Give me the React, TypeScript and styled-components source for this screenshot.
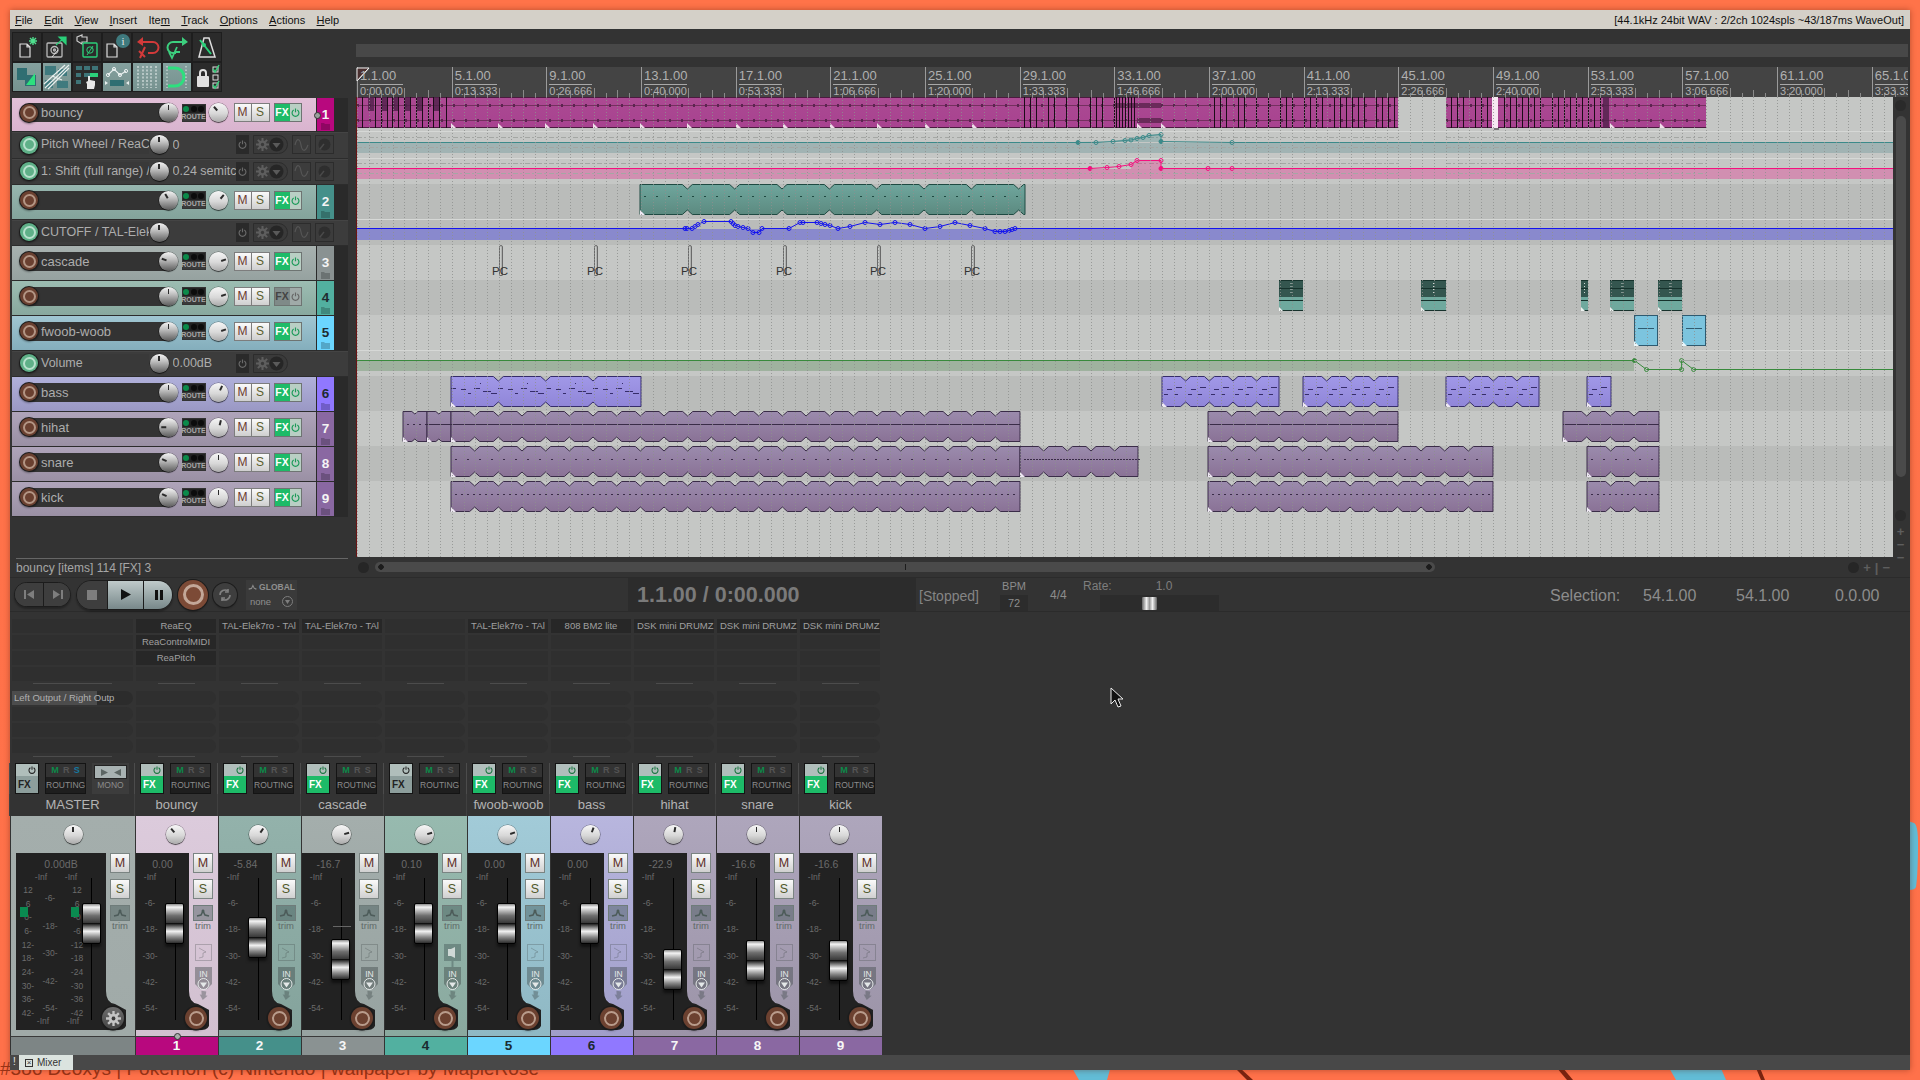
import React, { useId } from "react";
import styled, { createGlobalStyle } from "styled-components";

const Global = createGlobalStyle`
  html, body { margin: 0; padding: 0; background: #ff7248; }
  body { font-family: "Liberation Sans", Arial, sans-serif; overflow: hidden; }
  * { box-sizing: border-box; }
`;

/* ---------- data ---------- */
const ORIGIN = 357;
const BAR = 23.667;
type Tone = { row: [string, string]; num: string; dark?: boolean; strip: [string, string] };
const TONES: Record<string, Tone> = {
  bouncy: { row: ["#e2c0d8", "#d9b4cf"], num: "#b8087e", strip: ["#dccbdc", "#d2c0d0"] },
  t2: { row: ["#97b6af", "#83a39b"], num: "#45908a", strip: ["#93b2ab", "#84a39c"] },
  cascade: { row: ["#a8b2b0", "#96a2a0"], num: "#8a9292", strip: ["#a4aeac", "#97a3a1"] },
  t4: { row: ["#9cbdb2", "#88a89e"], num: "#52b0a0", dark: true, strip: ["#97baaf", "#8aa99f"] },
  fwoob: { row: ["#a0c6d2", "#84aebc"], num: "#6bd6ff", dark: true, strip: ["#a2cbd8", "#8fb8c4"] },
  bass: { row: ["#b0b0da", "#9a98c4"], num: "#9078ff", dark: true, strip: ["#b8b6de", "#a09ec9"] },
  drum: { row: ["#afa4ba", "#9a90a4"], num: "#8a68a2", strip: ["#aea6bc", "#9c94a8"] },
};

type TrackRow = { kind: "track"; h: number; name: string; no: number; tone: string; vol: number; pan: number; fxOff?: boolean; lane: "l" | "d" };
type EnvRow = { kind: "env"; h: number; name: string; value: string; lane: "l" | "d"; noExtras?: boolean };
const ROWS: (TrackRow | EnvRow)[] = [
  { kind: "track", h: 34, name: "bouncy", no: 1, tone: "bouncy", vol: 0, pan: -42, lane: "l" },
  { kind: "env", h: 27, name: "Pitch Wheel / ReaC", value: "0", lane: "l" },
  { kind: "env", h: 26, name: "1: Shift (full range) /", value: "0.24 semitc", lane: "l" },
  { kind: "track", h: 35, name: "", no: 2, tone: "t2", vol: -30, pan: 40, lane: "d" },
  { kind: "env", h: 26, name: "CUTOFF / TAL-Elek", value: "", lane: "d" },
  { kind: "track", h: 35, name: "cascade", no: 3, tone: "cascade", vol: -70, pan: 72, lane: "l" },
  { kind: "track", h: 35, name: "", no: 4, tone: "t4", vol: 0, pan: 72, fxOff: true, lane: "d" },
  { kind: "track", h: 35, name: "fwoob-woob", no: 5, tone: "fwoob", vol: 0, pan: 72, lane: "l" },
  { kind: "env", h: 26, name: "Volume", value: "0.00dB", lane: "l", noExtras: true },
  { kind: "track", h: 35, name: "bass", no: 6, tone: "bass", vol: 0, pan: 25, lane: "d" },
  { kind: "track", h: 35, name: "hihat", no: 7, tone: "drum", vol: -90, pan: 15, lane: "l" },
  { kind: "track", h: 35, name: "snare", no: 8, tone: "drum", vol: -65, pan: 0, lane: "d" },
  { kind: "track", h: 35, name: "kick", no: 9, tone: "drum", vol: -65, pan: 0, lane: "l" },
];

const STRIPS = [
  { no: 1, name: "bouncy", tone: "bouncy", pan: -40, vol: "0.00", top: 50, fx: ["ReaEQ", "ReaControlMIDI", "ReaPitch"], handle: true },
  { no: 2, name: "", tone: "t2", pan: 35, vol: "-5.84", top: 64, fx: ["TAL-Elek7ro - TAl"] },
  { no: 3, name: "cascade", tone: "cascade", pan: 75, vol: "-16.7", top: 86, fx: ["TAL-Elek7ro - TAl"], tick: true },
  { no: 4, name: "", tone: "t4", pan: 75, vol: "0.10", top: 50, fx: [], fxOff: true, speaker: true },
  { no: 5, name: "fwoob-woob", tone: "fwoob", pan: 72, vol: "0.00", top: 50, fx: ["TAL-Elek7ro - TAl"] },
  { no: 6, name: "bass", tone: "bass", pan: 20, vol: "0.00", top: 50, fx: ["808 BM2 lite"] },
  { no: 7, name: "hihat", tone: "drum", pan: 10, vol: "-22.9", top: 96, fx: ["DSK mini DRUMZ"] },
  { no: 8, name: "snare", tone: "drum", pan: 0, vol: "-16.6", top: 87, fx: ["DSK mini DRUMZ"] },
  { no: 9, name: "kick", tone: "drum", pan: 0, vol: "-16.6", top: 87, fx: ["DSK mini DRUMZ"] },
];

const MENU = ["File", "Edit", "View", "Insert", "Item", "Track", "Options", "Actions", "Help"];
const MENU_KEY = ["F", "E", "V", "I", "m", "T", "O", "A", "H"];

const RULER = Array.from({ length: 17 }, (_, k) => {
  const bar = 1 + k * 4;
  const secs = (k * 40000) / 3;
  const m = Math.floor(secs / 60000);
  const s = (secs - m * 60000) / 1000;
  const val = Math.floor(s * 1000) / 1000;
  return { x: k * 4 * BAR, bar: `${bar}.1.00`, time: `${m}:${val.toFixed(3).padStart(6, "0")}` };
});

/* ---------- desktop ---------- */
const Desktop = styled.div`
  position: relative;
  width: 1920px;
  height: 1080px;
  padding: 10px;
  overflow: hidden;
  background: linear-gradient(#ff7349, #ff714a);
`;
const WallText = styled.div`
  position: absolute;
  left: 0;
  top: 1057px;
  font-size: 19px;
  line-height: 24px;
  color: #9a3416;
  white-space: nowrap;
`;
const WallArt = styled.svg`
  position: absolute;
  inset: 0;
`;
const Shell = styled.div`
  position: relative;
  width: 1900px;
  height: 1060px;
  display: flex;
  flex-direction: column;
  background: #333;
  box-shadow: 0 0 6px rgba(90, 30, 10, 0.45);
`;

/* ---------- menu ---------- */
const MenuBar = styled.div`
  height: 19px;
  flex: none;
  display: flex;
  align-items: center;
  justify-content: space-between;
  padding: 0 6px 0 5px;
  background: #d4d0c8;
  color: #111;
  font-size: 11px;
`;
const MenuList = styled.div`
  display: flex;
  gap: 11.4px;
`;
const MenuKey = styled.span`
  text-decoration: underline;
`;
const AudioStatus = styled.div`
  font-size: 11px;
  white-space: nowrap;
`;

/* ---------- top area ---------- */
const Upper = styled.div`
  display: flex;
  height: 548px;
  flex: none;
`;
const LeftCol = styled.div`
  width: 346px;
  flex: none;
  padding: 3px 0 0 2px;
  display: flex;
  flex-direction: column;
`;
const Toolbar = styled.div`
  display: grid;
  grid-template-columns: repeat(7, 30px);
  grid-auto-rows: 30px;
  width: 210px;
  background: #1e1e1e;
`;
const ToolButton = styled.div<{ $on?: boolean }>`
  border: 1px solid #1e1e1e;
  background: ${(p) => (p.$on ? "linear-gradient(#84a09e,#76928f)" : "#2b2b2b")};
  display: flex;
  align-items: center;
  justify-content: center;
`;
const TrackList = styled.div`
  margin-top: 6px;
  width: 336px;
  display: flex;
  flex-direction: column;
`;
const StatusLine = styled.div`
  margin: auto 0 0 4px;
  height: 19px;
  width: 332px;
  border-top: 1px solid #666;
  color: #a6a6a6;
  font-size: 12px;
  line-height: 19px;
`;

/* tcp */
const TrackWrap = styled.div<{ $h: number }>`
  height: ${(p) => p.$h}px;
  display: flex;
  flex: none;
  background: #2a2a2a;
`;
const TrackBody = styled.div<{ $a: string; $b: string }>`
  width: 304px;
  display: flex;
  align-items: center;
  padding: 0 0 4px 8px;
  background: linear-gradient(${(p) => p.$a}, ${(p) => p.$b});
  border-bottom: 1px solid #2c2c2c;
`;
const NumberCell = styled.div<{ $bg: string; $dark?: boolean }>`
  position: relative;
  width: 17px;
  margin-left: 1px;
  flex: none;
  background: ${(p) => p.$bg};
  color: ${(p) => (p.$dark ? "#1f2a30" : "#f4f4f4")};
  font-size: 13.5px;
  font-weight: 700;
  text-align: center;
  padding-top: 9px;
  line-height: 16px;
  border-bottom: 1px solid #2c2c2c;
`;
const FolderMark = styled.svg`
  position: absolute;
  left: 4px;
  bottom: 1px;
`;
const Handle = styled.span`
  position: absolute;
  left: -3px;
  top: 14px;
  width: 7px;
  height: 7px;
  border-radius: 50%;
  background: #9aa09c;
  border: 1px solid #333;
`;
const Arm = styled.div<{ $green?: boolean }>`
  position: relative;
  z-index: 1;
  flex: none;
  width: 18px;
  height: 18px;
  border-radius: 50%;
  background: ${(p) => (p.$green ? "#5fb088" : "#6a4030")};
  box-shadow: 0 0 0 1px #1c1c1c, 0 1px 2px 1px rgba(0, 0, 0, 0.4);
  display: flex;
  align-items: center;
  justify-content: center;
  &::after {
    content: "";
    width: 9px;
    height: 9px;
    border-radius: 50%;
    border: 2px solid ${(p) => (p.$green ? "#b8e0cc" : "#b39584")};
  }
`;
const NameField = styled.div<{ $w: number; $flat?: boolean }>`
  flex: none;
  width: ${(p) => p.$w}px;
  height: 19px;
  margin-left: -9px;
  padding-left: 12px;
  background: ${(p) => (p.$flat ? "#393939" : "#333")};
  color: #adadad;
  font-size: ${(p) => (p.$flat ? 12.5 : 13)}px;
  line-height: 19px;
  white-space: nowrap;
  overflow: hidden;
`;
const Knob = styled.div<{ $d: number; $angle: number; $pan?: boolean; $gap?: number }>`
  position: relative;
  z-index: 1;
  flex: none;
  width: ${(p) => p.$d}px;
  height: ${(p) => p.$d}px;
  margin-left: ${(p) => p.$gap ?? 0}px;
  border-radius: 50%;
  background: ${(p) =>
    p.$pan
      ? "linear-gradient(#f6f6f6, #d8d8d8 55%, #aaa)"
      : "linear-gradient(#f4f4f4, #bdbdbd 40%, #5c5c5c)"};
  box-shadow: 0 1px 1px rgba(0, 0, 0, 0.55), 0 0 0 0.5px rgba(0, 0, 0, 0.45);
  &::after {
    content: "";
    position: absolute;
    left: calc(50% - 0.75px);
    top: 2px;
    width: 1.5px;
    height: 5px;
    background: #2b2b2b;
    transform-origin: 50% ${(p) => p.$d / 2 - 2}px;
    transform: rotate(${(p) => p.$angle}deg);
  }
`;
const RouteBox = styled.div`
  flex: none;
  width: 24px;
  height: 18px;
  margin-left: 3.5px;
  background: #3a3a3a;
  border: 1px solid #333;
  display: flex;
  flex-direction: column;
  align-items: center;
  color: #a8a8a8;
  font-size: 7px;
  font-weight: 700;
  line-height: 8px;
`;
const LedRow = styled.div`
  display: flex;
  gap: 1.5px;
  padding: 1px 0 0;
  height: 8px;
  width: 100%;
  justify-content: center;
  background: #222;
`;
const Led = styled.i<{ $on?: boolean }>`
  width: 6px;
  height: 6px;
  border-radius: 50%;
  background: ${(p) => (p.$on ? "#0c8a4a" : "#0c0c0c")};
`;
const KeyGroup = styled.div<{ $gap?: number }>`
  display: flex;
  flex: none;
  margin-left: ${(p) => p.$gap ?? 5.5}px;
`;
const KeyButton = styled.div<{ $c: string }>`
  width: 18px;
  height: 19px;
  background: linear-gradient(#fafafa, #cfcfcf);
  border: 1px solid #7d7d7d;
  color: ${(p) => p.$c};
  font-size: 12px;
  line-height: 17px;
  text-align: center;
  & + & {
    margin-left: -1px;
    width: 19px;
  }
`;
const FxGroup = styled.div<{ $off?: boolean }>`
  flex: none;
  margin-left: 4px;
  width: 28px;
  height: 19px;
  display: flex;
  border: 1px solid #6e7472;
`;
const FxLabel = styled.div<{ $off?: boolean }>`
  width: 15px;
  background: ${(p) => (p.$off ? "#7f8a88" : "#1dbb68")};
  color: ${(p) => (p.$off ? "#444" : "#fff")};
  font-size: 10.5px;
  font-weight: 700;
  line-height: 17px;
  text-align: center;
`;
const FxPower = styled.div<{ $off?: boolean }>`
  flex: 1;
  background: ${(p) => (p.$off ? "#a0aaa8" : "#b9cfc4")};
  display: flex;
  align-items: center;
  justify-content: center;
`;

/* env rows */
const EnvBody = styled.div<{ $h: number }>`
  height: ${(p) => p.$h}px;
  flex: none;
  display: flex;
  align-items: center;
  padding: 0 0 2px 8px;
  background: #3c3c3c;
  border-bottom: 1px solid #2c2c2c;
  border-top: 1px solid #444;
`;
const EnvValue = styled.div`
  flex: none;
  width: 63px;
  margin-left: 4px;
  color: #adadad;
  font-size: 12.5px;
  white-space: nowrap;
  overflow: hidden;
`;
const EnvPower = styled.div`
  flex: none;
  width: 13px;
  height: 19px;
  background: #2a2a2a;
  display: flex;
  align-items: center;
  justify-content: center;
`;
const GearPill = styled.div`
  flex: none;
  margin-left: 4px;
  width: 35px;
  height: 19px;
  border: 1px solid #2c2c2c;
  border-radius: 0 10px 10px 0;
  background: #3a3a3a;
  display: flex;
  align-items: center;
  justify-content: center;
`;
const EnvTool = styled.div`
  flex: none;
  margin-left: 4px;
  width: 19px;
  height: 19px;
  border: 1px solid #2c2c2c;
  display: flex;
  align-items: center;
  justify-content: center;
`;

/* ---------- arrange ---------- */
const RightCol = styled.div`
  flex: 1;
  min-width: 0;
  display: flex;
  flex-direction: column;
`;
const OverBar = styled.div`
  height: 38px;
  flex: none;
  padding: 15px 2px 10px 0;
  &::after {
    content: "";
    display: block;
    height: 13px;
    background: #484848;
  }
`;
const Ruler = styled.div`
  position: relative;
  height: 30px;
  flex: none;
  background: #444;
  overflow: hidden;
  margin-right: 2px;
`;
const RulerTicks = styled.svg`
  position: absolute;
  left: 0;
  top: 0;
`;
const RulerMark = styled.div`
  position: absolute;
  top: 2px;
  color: #b0b0b0;
  white-space: nowrap;
`;
const RulerBar = styled.div`
  font-size: 13px;
  line-height: 14px;
  padding-bottom: 1px;
  border-bottom: 1px solid #a8a8a8;
`;
const RulerTime = styled.div`
  font-size: 11px;
  line-height: 13px;
`;
const ArrangeRow = styled.div`
  flex: 1;
  display: flex;
  min-height: 0;
`;
const Timeline = styled.div`
  position: relative;
  width: 1537px;
  flex: none;
  border-left: 1px solid #6a1414;
  display: flex;
  flex-direction: column;
  overflow: hidden;
`;
const Lane = styled.div<{ $h?: number; $tone: "l" | "d"; $hair?: boolean }>`
  position: relative;
  flex: ${(p) => (p.$h ? `0 0 ${p.$h}px` : "1")};
  background: ${(p) => (p.$tone === "l" ? "#c5c7c5" : "#babcba")};
  box-shadow: ${(p) => (p.$hair ? "inset 0 1px 0 #d6d8d6" : "none")};
`;
const GridOverlay = styled.svg`
  position: absolute;
  left: 0;
  top: 0;
  pointer-events: none;
`;
const ItemBox = styled.div<{ $depth?: number }>`
  position: absolute;
  top: 0;
  height: 32px;
`;
const EnvBand = styled.div<{ $top: number; $h: number; $c: string }>`
  position: absolute;
  left: 0;
  right: 0;
  top: ${(p) => p.$top}px;
  height: ${(p) => p.$h}px;
  background: ${(p) => p.$c};
`;
const LaneArt = styled.svg`
  position: absolute;
  left: 0;
  top: 0;
`;
const PcPin = styled.div`
  position: absolute;
  top: 0;
  width: 4px;
  height: 31px;
  background: linear-gradient(90deg, #d4d6d4, #a4a6a4);
  border: 1px solid #6a6a6a;
  border-radius: 2px 2px 1px 1px;
`;
const PcLabel = styled.span`
  position: absolute;
  top: 18px;
  left: -8px;
  font-size: 11.5px;
  line-height: 14px;
  color: #333;
`;
const VScroll = styled.div`
  flex: 1;
  display: flex;
  flex-direction: column;
  align-items: center;
  padding-right: 2px;
`;
const ScrollDot = styled.div<{ $m: string }>`
  width: 11px;
  height: 11px;
  margin: ${(p) => p.$m};
  border-radius: 50%;
  background: #2a2a2a;
  flex: none;
`;
const VThumb = styled.div`
  width: 10px;
  height: 361px;
  margin-top: 5px;
  border-radius: 5px;
  background: #4a4a4a;
  flex: none;
`;
const ScrollSign = styled.div<{ $m: string }>`
  margin: ${(p) => p.$m};
  color: #5e5e5e;
  font-size: 13px;
  font-weight: 700;
  line-height: 12px;
  flex: none;
`;
const HScroll = styled.div`
  height: 20px;
  flex: none;
  display: flex;
  align-items: center;
  padding: 0 20px 0 2px;
  gap: 4px;
`;
const HDot = styled.div`
  width: 11px;
  height: 11px;
  border-radius: 50%;
  background: #262626;
  flex: none;
`;
const HThumb = styled.div`
  position: relative;
  width: 1060px;
  height: 10px;
  margin-left: 2px;
  border-radius: 5px;
  background: #4a4a4a;
  flex: none;
  &::before {
    content: "";
    position: absolute;
    left: 530px;
    top: 2px;
    width: 1px;
    height: 6px;
    background: #1c1c1c;
  }
  &::after {
    content: "";
    position: absolute;
    left: 3px;
    top: 2px;
    width: 1054px;
    height: 6px;
    background:
      radial-gradient(circle at 3px 3px, #1c1c1c 2.5px, transparent 3px) left / 6px 6px no-repeat,
      radial-gradient(circle at 3px 3px, #1c1c1c 2.5px, transparent 3px) right / 6px 6px no-repeat;
  }
`;
const HControls = styled.div`
  margin-left: auto;
  display: flex;
  align-items: center;
  gap: 4px;
  color: #5e5e5e;
  font-size: 13px;
  font-weight: 700;
`;

/* ---------- transport ---------- */
const Transport = styled.div`
  height: 35px;
  flex: none;
  display: flex;
  align-items: center;
  padding-left: 4px;
  border-top: 1px solid #2b2b2b;
  border-bottom: 1px solid #2b2b2b;
  color: #8c8c8c;
`;
const SkipGroup = styled.div`
  width: 57px;
  height: 25px;
  flex: none;
  display: flex;
  border-radius: 13px;
  background: #3e3e3e;
  border: 1px solid #1c1c1c;
  box-shadow: 0 2px 2px rgba(0, 0, 0, 0.3);
  overflow: hidden;
`;
const PlayGroup = styled.div`
  width: 97px;
  height: 30px;
  flex: none;
  margin-left: 5px;
  display: flex;
  border-radius: 15px;
  border: 1px solid #1c1c1c;
  box-shadow: 0 2px 2px rgba(0, 0, 0, 0.3);
  overflow: hidden;
`;
const TransCell = styled.div<{ $w: number; $light?: boolean }>`
  flex: none;
  width: ${(p) => p.$w}px;
  display: flex;
  align-items: center;
  justify-content: center;
  background: ${(p) => (p.$light ? "linear-gradient(#bfcaca,#78888a)" : "#3e3e3e")};
  & + & {
    border-left: 1px solid #1c1c1c;
  }
`;
const RecordBtn = styled.div`
  width: 30px;
  height: 30px;
  flex: none;
  margin-left: 5px;
  border-radius: 50%;
  background: #7c4a36;
  box-shadow: 0 0 0 1px #1c1c1c, 0 2px 2px rgba(0, 0, 0, 0.3);
  display: flex;
  align-items: center;
  justify-content: center;
  &::after {
    content: "";
    width: 15px;
    height: 15px;
    border-radius: 50%;
    border: 3px solid #c3a798;
  }
`;
const RepeatBtn = styled.div`
  width: 24px;
  height: 24px;
  flex: none;
  margin-left: 5px;
  border-radius: 50%;
  background: #3e3e3e;
  box-shadow: 0 0 0 1px #1c1c1c, 0 2px 2px rgba(0, 0, 0, 0.3);
  display: flex;
  align-items: center;
  justify-content: center;
`;
const AutoBox = styled.div`
  width: 51px;
  height: 30px;
  flex: none;
  margin-left: 9px;
  background: #3a3a3a;
  padding: 1px 2px;
  font-size: 8.5px;
  font-weight: 700;
  color: #8f8f8f;
`;
const AutoHead = styled.div`
  display: flex;
  align-items: center;
  gap: 2px;
  height: 13px;
`;
const AutoMode = styled.div`
  display: flex;
  align-items: center;
  justify-content: space-between;
  height: 15px;
  padding: 0 2px;
  font-weight: 400;
  font-size: 9.5px;
`;
const TimeWrap = styled.div`
  width: 288px;
  height: 33px;
  flex: none;
  margin-left: 331px;
  padding-left: 9px;
  background: #2c2c2c;
  color: #7a7a7a;
  font-size: 21.5px;
  font-weight: 700;
  line-height: 35px;
`;
const Stopped = styled.div`
  width: 80px;
  flex: none;
  margin-left: 3px;
  padding-top: 2px;
  font-size: 14px;
  color: #858585;
`;
const Tempo = styled.div`
  width: 28px;
  height: 33px;
  flex: none;
  margin-left: 1px;
  text-align: center;
  font-size: 11px;
  line-height: 17px;
`;
const TempoValue = styled.div`
  background: #2c2c2c;
  line-height: 16px;
`;
const Meter = styled.div`
  width: 33px;
  flex: none;
  margin-left: 22px;
  font-size: 12px;
`;
const RateBox = styled.div`
  width: 136px;
  flex: none;
  font-size: 12px;
`;
const RateHead = styled.div`
  display: flex;
  height: 17px;
  line-height: 17px;
  gap: 44px;
  color: #7e7e7e;
`;
const RateSlider = styled.div`
  position: relative;
  height: 16px;
  margin-left: 17px;
  width: 119px;
  background: #2c2c2c;
`;
const RateThumb = styled.div`
  position: absolute;
  left: 42px;
  top: 2px;
  width: 15px;
  height: 13px;
  border-radius: 1px;
  background: linear-gradient(90deg, #666, #f0f0f0 30%, #999 50%, #f0f0f0 70%, #666);
`;
const Selection = styled.div`
  margin-left: 331px;
  padding-top: 2px;
  display: grid;
  grid-template-columns: 93px 93px 99px auto;
  font-size: 16px;
  color: #8c8c8c;
`;

/* ---------- mixer ---------- */
const Mixer = styled.div`
  height: 443px;
  flex: none;
  display: flex;
`;
const Strip = styled.div<{ $w: number }>`
  width: ${(p) => p.$w}px;
  flex: none;
  display: flex;
  flex-direction: column;
  padding-top: 7px;
`;
const SlotStack = styled.div<{ $pad: string }>`
  display: flex;
  flex-direction: column;
  gap: 2px;
  padding: ${(p) => p.$pad};
`;
const FxSlot = styled.div<{ $used?: boolean }>`
  height: 14px;
  background: ${(p) => (p.$used ? "#272727" : "#2f2f2f")};
  color: #a0a0a0;
  font-size: 9.5px;
  line-height: 14px;
  text-align: center;
  padding: 0 3px;
  white-space: nowrap;
  overflow: hidden;
`;
const SendSlot = styled.div<{ $label?: boolean }>`
  position: relative;
  height: 14px;
  border-radius: 0 7px 7px 0;
  background: ${(p) => (p.$label ? "linear-gradient(90deg,#4c4c4c 0,#4c4c4c 70%,#2c2c2c 70%)" : "#2f2f2f")};
  color: #b0b0b0;
  font-size: 9.5px;
  line-height: 14px;
  padding-left: 2px;
  white-space: nowrap;
  overflow: hidden;
`;
const Divider = styled.div<{ $inset: number; $mt: number; $mb: number }>`
  height: 1px;
  margin: ${(p) => p.$mt}px ${(p) => p.$inset}px ${(p) => p.$mb}px;
  background: #4c4c4c;
`;
const ControlRow = styled.div<{ $pad: number }>`
  height: 31px;
  flex: none;
  display: flex;
  gap: 6px;
  padding-left: ${(p) => p.$pad}px;
  box-shadow: -1px 0 0 #4c4c4c;
`;
const FxBox = styled.div<{ $off?: boolean }>`
  width: 24px;
  flex: none;
  display: flex;
  flex-direction: column;
  border: 1px solid #141414;
  background: ${(p) => (p.$off ? "#8d9e9c" : "#1dbb68")};
  color: ${(p) => (p.$off ? "#222" : "#fff")};
  font-size: 10px;
  font-weight: 700;
  padding-left: 0;
`;
const FxTop = styled.div`
  height: 12px;
  flex: none;
  background: #b0bebb;
  display: flex;
  justify-content: flex-end;
  align-items: center;
  padding-right: 2px;
`;
const FxText = styled.div`
  padding-left: 2px;
  line-height: 18px;
`;
const RouteWide = styled.div`
  width: 41px;
  flex: none;
  border: 1px solid #141414;
  background: #1e1e1e;
  font-size: 8.5px;
  color: #8c8c8c;
  text-align: center;
`;
const RouteHead = styled.div`
  height: 13px;
  background: #333;
  display: flex;
  justify-content: space-around;
  padding: 0 3px;
  line-height: 13px;
  font-size: 9px;
  font-weight: 700;
  color: #555;
`;
const RouteM = styled.span`
  color: #0c8a4a;
`;
const RouteS = styled.span<{ $blue?: boolean }>`
  color: ${(p) => (p.$blue ? "#1678a0" : "#555")};
`;
const RouteText = styled.div`
  line-height: 16px;
`;
const MonoBox = styled.div`
  width: 37px;
  flex: none;
  background: #3c3c3c;
  padding: 2px 2px 0;
  color: #8c8c8c;
  font-size: 8.5px;
  text-align: center;
  line-height: 13px;
`;
const MonoBtn = styled.div`
  height: 14px;
  background: #a8b2b2;
  border: 1px solid #222;
  display: flex;
  align-items: center;
  justify-content: center;
`;
const StripName = styled.div`
  height: 22px;
  flex: none;
  text-align: center;
  color: #b4b4b4;
  font-size: 13px;
  line-height: 22px;
  white-space: nowrap;
  box-shadow: -1px 0 0 #404040;
`;
const StripBody = styled.div<{ $a: string; $b: string }>`
  position: relative;
  height: 220px;
  flex: none;
  background: linear-gradient(${(p) => p.$a}, ${(p) => p.$b});
  border-left: 1px solid #333;
`;
const PanRow = styled.div<{ $shift: number }>`
  height: 37px;
  display: flex;
  align-items: center;
  justify-content: center;
  padding-right: ${(p) => p.$shift}px;
`;
const BodyRow = styled.div<{ $pad: number }>`
  display: flex;
  padding-left: ${(p) => p.$pad}px;
`;
const FaderPanel = styled.div<{ $master?: boolean }>`
  position: relative;
  flex: none;
  width: ${(p) => (p.$master ? 110 : 73)}px;
  height: 177px;
  background: #222;
  clip-path: ${(p) =>
    p.$master
      ? `path("M0 0H90V138Q90 150 99 151L112 158V168Q110 177 103 177H0Z")`
      : `path("M0 0H53V138Q53 150 62 151L75 158V168Q73 177 66 177H0Z")`};
`;
const ReadOut = styled.div`
  height: 18px;
  line-height: 22px;
  color: #6a6a6a;
  font-size: 10.5px;
  text-align: center;
`;
const ReadMain = styled.div`
  width: 53px;
`;
const ReadWide = styled.div`
  width: 90px;
`;
const Scale = styled.div<{ $w: number; $h?: number; $mt?: number; $left?: number }>`
  position: absolute;
  top: ${(p) => p.$mt ?? 18}px;
  left: ${(p) => p.$left ?? 0}px;
  width: ${(p) => p.$w}px;
  height: ${(p) => p.$h ?? 143}px;
  display: flex;
  flex-direction: column;
  justify-content: space-between;
  color: #6c6c6c;
  font-size: 8.5px;
  line-height: 12px;
  text-align: center;
`;
const FaderLine = styled.div<{ $x: number }>`
  position: absolute;
  left: ${(p) => p.$x}px;
  top: 25px;
  width: 1px;
  height: 142px;
  background: #000;
`;
const FaderCap = styled.div<{ $x: number; $top: number }>`
  position: absolute;
  left: ${(p) => p.$x}px;
  top: ${(p) => p.$top}px;
  width: 19px;
  height: 41px;
  border: 1px solid #000;
  border-radius: 2px;
  box-shadow: 0 3px 3px rgba(0, 0, 0, 0.5);
  background: linear-gradient(
    #8a8a8a 0,
    #f4f4f4 8%,
    #6e6e6e 30%,
    #3a3a3a 48%,
    #111 50%,
    #2a2a2a 52%,
    #f2f2f2 70%,
    #888 85%,
    #2e2e2e 100%
  );
`;
const GainTick = styled.div`
  position: absolute;
  left: 31px;
  top: 73px;
  width: 18px;
  height: 1px;
  background: #666;
`;
const MeterBlock = styled.div<{ $x: number }>`
  position: absolute;
  left: ${(p) => p.$x}px;
  top: 54px;
  width: 8px;
  height: 10px;
  background: #0a8a50;
`;
const SideCol = styled.div<{ $ml: number }>`
  position: relative;
  z-index: 1;
  margin-left: ${(p) => p.$ml}px;
  width: 20px;
  flex: none;
  display: flex;
  flex-direction: column;
  align-items: center;
`;
const SideKey = styled.div<{ $c: string; $mb: number }>`
  width: 20px;
  height: 20px;
  flex: none;
  margin-bottom: ${(p) => p.$mb}px;
  background: linear-gradient(#fafafa, #d0d0d0);
  border: 1px solid #7a8482;
  color: ${(p) => p.$c};
  font-size: 12.5px;
  line-height: 18px;
  text-align: center;
`;
const SideEnv = styled.div`
  width: 20px;
  height: 16px;
  flex: none;
  background: rgba(60, 80, 80, 0.42);
  border: 1px solid #6f7c7a;
  display: flex;
  align-items: center;
  justify-content: center;
`;
const TrimText = styled.div`
  color: #5f6a68;
  font-size: 9.5px;
  line-height: 10px;
  height: 11px;
`;
const SideArt = styled.svg`
  flex: none;
  margin-top: 11px;
`;
const RecRound = styled.div<{ $x: number; $gear?: boolean }>`
  position: absolute;
  z-index: 2;
  left: ${(p) => p.$x}px;
  top: 191px;
  width: 22px;
  height: 22px;
  border-radius: 50%;
  background: ${(p) => (p.$gear ? "linear-gradient(#6e6e6e,#444)" : "#6c4130")};
  box-shadow: 0 0 0 1.5px #1c1c1c, 0 2px 2px rgba(0, 0, 0, 0.35);
  display: flex;
  align-items: center;
  justify-content: center;
  &::after {
    content: "";
    display: ${(p) => (p.$gear ? "none" : "block")};
    width: 11px;
    height: 11px;
    border-radius: 50%;
    border: 2px solid #b99c8c;
  }
`;
const MixNumber = styled.div<{ $bg: string; $dark?: boolean }>`
  position: relative;
  height: 19px;
  flex: none;
  background: ${(p) => p.$bg};
  color: ${(p) => (p.$dark ? "#1b2a30" : "#f6f6f6")};
  border-top: 1px solid #3a3a3a;
  border-left: 1px solid #333;
  font-size: 13.5px;
  font-weight: 700;
  line-height: 18px;
  text-align: center;
  padding-right: 1px;
`;
const MixHandle = styled.span`
  position: absolute;
  left: 38px;
  top: -4px;
  width: 7px;
  height: 7px;
  border-radius: 50%;
  background: #aab0ac;
  border: 1px solid #333;
`;
const TabBar = styled.div`
  height: 15px;
  flex: none;
  background: #484848;
  display: flex;
  align-items: stretch;
  padding-left: 3px;
`;
const Bang = styled.div`
  width: 6px;
  color: #e8e8e8;
  font-size: 10px;
  line-height: 13px;
`;
const MixerTab = styled.div`
  width: 54px;
  background: #dbe3df;
  display: flex;
  align-items: center;
  gap: 4px;
  padding-left: 6px;
  color: #333;
  font-size: 10px;
`;
const TabClose = styled.span`
  width: 8px;
  height: 8px;
  border: 1px solid #333;
  font-size: 8px;
  line-height: 6px;
  text-align: center;
`;
const Pointer = styled.svg`
  position: absolute;
  left: 1110px;
  top: 687px;
  z-index: 5;
`;

/* ---------- svg parts ---------- */
const Power = ({ c = "#888", s = 9 }: { c?: string; s?: number }) => (
  <svg width={s} height={s} viewBox="0 0 10 10" fill="none" stroke={c} strokeWidth="1.3">
    <path d="M3 2.2A3.8 3.8 0 1 0 7 2.2M5 .5V4.8" />
  </svg>
);

const Doc = ({ x, y }: { x: number; y: number }) => (
  <path d={`M${x} ${y}h7l3 3v10h-10zM${x + 7} ${y}v3h3`} fill="none" stroke="#ddd" strokeWidth="1.2" />
);
const Disk = ({ x, y, c = "#bbb" }: { x: number; y: number; c?: string }) => (
  <g fill="none" stroke={c} strokeWidth="1.3">
    <rect x={x} y={y} width="15" height="14" rx="1" />
    <circle cx={x + 7.5} cy={y + 7} r="3.5" />
    <circle cx={x + 7.5} cy={y + 7} r="1" />
  </g>
);
const TOOLS: { on?: boolean; art: React.ReactNode }[] = [
  { art: <><Doc x={8} y={12} /><path d="M21 5v8M17 9h8M18 6l6 6M24 6l-6 6" stroke="#4fe08e" strokeWidth="1.4" /></> },
  { art: <><Disk x={5} y={11} /><path d="M14 13l8-7M17 5h7v7z" fill="#2bd07a" stroke="#2bd07a" strokeWidth="1.2" /><path d="M10 25l6-7" stroke="#ddd" /></> },
  { art: <><path d="M5 5l5-2v2h5v5h-5v2l-5-3z" fill="none" stroke="#ccc" strokeWidth="1.2" /><rect x="11" y="11" width="14" height="14" rx="1" fill="none" stroke="#2bd07a" strokeWidth="1.4" /><circle cx="18" cy="18" r="3.2" fill="none" stroke="#2bd07a" /><path d="M15 23l6-9" stroke="#2bd07a" /></> },
  { art: <><Doc x={5} y={12} /><circle cx="21" cy="9" r="7" fill="#3f7a7e" /><text x="21" y="13" fontSize="11" fontFamily="Liberation Serif" textAnchor="middle" fill="#e8e8e8">i</text></> },
  { art: <><path d="M8 10h13a5 5 0 0 1 0 11h-5" fill="none" stroke="#d23a3a" strokeWidth="2" /><path d="M5 10l6-5v9z" fill="#d23a3a" /><path d="M7 19l6 6M13 15L8 26" stroke="#d23a3a" strokeWidth="2" /></> },
  { art: <><path d="M22 10H11a5 5 0 0 0 0 11h3" fill="none" stroke="#3ccf7e" strokeWidth="2" /><path d="M26 10l-6-5v9z" fill="#3ccf7e" /><path d="M7 20l3 6 5-11M13 20h5" stroke="#3ccf7e" strokeWidth="1.8" fill="none" /></> },
  { art: <><path d="M12 6h5l6 19H7z" fill="none" stroke="#ddd" strokeWidth="1.5" /><path d="M8 8l11 14" stroke="#2bd07a" strokeWidth="2" /><circle cx="12" cy="13" r="2" fill="#2bd07a" /></> },
  { on: true, art: <><rect x="5" y="6" width="10" height="12" fill="#2f6e72" /><rect x="13" y="13" width="11" height="11" fill="#2f6e72" /><path d="M14 23l9-12v12z" fill="#2de07e" /></> },
  { on: true, art: <><rect x="3" y="4" width="11" height="9" fill="#3f7a7e" /><rect x="16" y="7" width="9" height="7" fill="#3f7a7e" /><rect x="3" y="18" width="8" height="8" fill="#3f7a7e" /><rect x="15" y="19" width="11" height="7" fill="#3f7a7e" /><path d="M3 26L27 3M6 27L27 6M2 22L23 3" stroke="#e8efee" strokeWidth="1.2" /><path d="M10 14l10 4" stroke="#e8efee" strokeWidth="1.2" /></> },
  { art: <><g fill="#3e7478"><rect x="4" y="4" width="6" height="4" /><rect x="12" y="4" width="6" height="4" /><rect x="20" y="4" width="6" height="4" /><rect x="4" y="11" width="5" height="4" /><rect x="4" y="18" width="5" height="4" /><rect x="12" y="11" width="6" height="4" /></g><rect x="18" y="11" width="8" height="4" fill="#2bd07a" /><path d="M15 27v-5l-1-2 2-1v-5h2v4l5 1v4l-1 4z" fill="#e8e8e8" /></> },
  { on: true, art: <><path d="M6 13l6-6 6 6 6-4" fill="none" stroke="#e8efee" strokeWidth="1.1" /><g fill="none" stroke="#e8efee"><circle cx="6" cy="13" r="1.6" /><circle cx="12" cy="7" r="1.6" /><circle cx="18" cy="13" r="1.6" /><circle cx="24" cy="9" r="1.6" /></g><rect x="8" y="18" width="14" height="6" fill="#2f6e72" /><path d="M6 21l-3-2v4zM24 21l3-2v4z" fill="#e8efee" /></> },
  { on: true, art: <g stroke="#eef3f2" strokeWidth="1" strokeDasharray="2 1.5"><path d="M6 4v22M11 4v22M15 4v22M19 4v22M24 4v22" /></g> },
  { on: true, art: <><path d="M6 6h7a8 8 0 0 1 0 18H6" fill="none" stroke="#2de07e" strokeWidth="3" /><path d="M5 4v22M24 4v22" stroke="#dfe8e6" strokeDasharray="1.5 2" /></> },
  { art: <><rect x="5" y="14" width="12" height="11" rx="1" fill="#e0e0e0" /><path d="M8 14v-3a3 3 0 0 1 6 0v3" fill="none" stroke="#e0e0e0" strokeWidth="2" /><g fill="none" stroke="#e0e0e0"><rect x="21" y="5" width="5" height="5" /><rect x="21" y="13" width="5" height="5" /><rect x="21" y="21" width="5" height="5" /></g><path d="M21 7l2 3 4-7M21 23l2 3 4-7" fill="none" stroke="#3ccf7e" strokeWidth="1.5" /></> },
];

const Gear = ({ s = 13, c = "#5e5e5e" }: { s?: number; c?: string }) => (
  <svg width={s} height={s} viewBox="0 0 14 14">
    <g stroke={c} strokeWidth="2.2">
      <path d="M7 0v14M0 7h14M2 2l10 10M12 2L2 12" />
    </g>
    <circle cx="7" cy="7" r="4.4" fill={c} />
    <circle cx="7" cy="7" r="1.8" fill="#3a3a3a" />
  </svg>
);

function EnvRowView({ r }: { r: EnvRow }) {
  return (
    <EnvBody $h={r.h}>
      <Arm $green />
      <NameField $w={120} $flat>{r.name}</NameField>
      <Knob $d={19} $angle={0} $gap={0.5} />
      <EnvValue>{r.value}</EnvValue>
      <EnvPower><Power c="#6a6a6a" /></EnvPower>
      <GearPill>
        <Gear />
        <svg width="15" height="15" viewBox="0 0 15 15">
          <circle cx="7.5" cy="7.5" r="7" fill="#262626" />
          <path d="M3.5 6h8l-4 5z" fill="#5a5a5a" />
        </svg>
      </GearPill>
      {!r.noExtras && (
        <>
          <EnvTool>
            <svg width="15" height="12" viewBox="0 0 15 12" fill="none" stroke="#565656" strokeWidth="1.2"><path d="M1 6c2-8 5-6 6 0s4 8 7 0" /></svg>
          </EnvTool>
          <EnvTool>
            <svg width="13" height="13" viewBox="0 0 13 13"><circle cx="6.5" cy="6.5" r="6" fill="#2e2e2e" /><path d="M2 11l4-5" stroke="#4a4a4a" strokeWidth="1.4" /></svg>
          </EnvTool>
        </>
      )}
    </EnvBody>
  );
}

function TrackRowView({ r }: { r: TrackRow }) {
  const t = TONES[r.tone];
  return (
    <TrackWrap $h={r.h}>
      <TrackBody $a={t.row[0]} $b={t.row[1]}>
        <Arm />
        <NameField $w={141}>{r.name}</NameField>
        <Knob $d={19} $angle={r.vol} $gap={-11} />
        <RouteBox>
          <LedRow><Led $on /><Led /><Led /></LedRow>
          ROUTE
        </RouteBox>
        <Knob $d={19} $angle={r.pan} $pan $gap={3.5} />
        <KeyGroup>
          <KeyButton $c="#6a3a30">M</KeyButton>
          <KeyButton $c="#5c6030">S</KeyButton>
        </KeyGroup>
        <FxGroup>
          <FxLabel $off={r.fxOff}>FX</FxLabel>
          <FxPower $off={r.fxOff}><Power c={r.fxOff ? "#666" : "#1b9a58"} /></FxPower>
        </FxGroup>
      </TrackBody>
      <NumberCell $bg={t.num} $dark={t.dark}>
        {r.no}
        {r.no === 1 && <Handle />}
        <FolderMark width="9" height="7" viewBox="0 0 9 7"><path d="M0 7V0h3l1 1h5v6z" fill="rgba(0,0,0,.22)" /></FolderMark>
      </NumberCell>
    </TrackWrap>
  );
}

/* ---------- arrange items ---------- */
type ItemProps = {
  from: number; to: number; top: string; bottom: string; stroke: string; loop?: number; depth?: number;
  notes?: [number, number, number][]; line?: number; dots?: number; dotGap?: number;
};
function Item({ from, to, top, bottom, stroke, loop, depth = 5, notes, line, dots, dotGap = 12 }: ItemProps) {
  const id = useId().replace(/[^a-zA-Z0-9]/g, "");
  const w = to - from;
  const h = 31;
  const upper: string[] = [`0,0.5`];
  const lower: string[] = [`0,${h - 0.5}`];
  const n = loop ? Math.floor((w - depth - 1) / loop) : 0;
  for (let k = 1; k <= n; k++) {
    const x = k * loop!;
    upper.push(`${x - depth},0.5`, `${x},${depth}`, `${x + depth},0.5`);
    lower.unshift(`${x + depth},${h - 0.5}`, `${x},${h - depth}`, `${x - depth},${h - 0.5}`);
  }
  upper.push(`${w},0.5`);
  lower.unshift(`${w},${h - 0.5}`);
  const loops = Array.from({ length: n + 1 }, (_, k) => k * (loop ?? w));
  const dotXs = dots !== undefined ? Array.from({ length: Math.floor(w / dotGap) }, (_, k) => 4 + k * dotGap) : [];
  return (
    <ItemBox style={{ left: from - ORIGIN, width: w }}>
      <svg width={w} height={32} style={{ display: "block", overflow: "visible" }}>
        <defs>
          <linearGradient id={id} x1="0" y1="0" x2="0" y2="1">
            <stop offset="0" stopColor={top} />
            <stop offset="1" stopColor={bottom} />
          </linearGradient>
        </defs>
        <polygon points={[...upper, ...lower].join(" ")} fill={`url(#${id})`} stroke={stroke} strokeWidth="1" />
        {line !== undefined && <line x1="0" x2={w} y1={line + 0.5} y2={line + 0.5} stroke={stroke} />}
        {dotXs.map((x) => <rect key={x} x={Math.round(x)} y={dots} width="2" height="1" fill={stroke} />)}
        {notes && loops.flatMap((lx, k) =>
          notes.filter(([a]) => lx + a < w).map(([a, y, b], j) => (
            <rect key={`${k}-${j}`} x={Math.round(lx + a)} y={y} width={Math.max(1, Math.min(b - a, w - lx - a))} height="1" fill={stroke} />
          ))
        )}
        <polygon points={`0,${h} 0,${h - 5} 5,${h}`} fill="#efe9f4" />
      </svg>
    </ItemBox>
  );
}

const PURPLE = { top: "#9b8bad", bottom: "#8a7296", stroke: "#3a2c48" };
const BASSC = { top: "#a198e8", bottom: "#9086d8", stroke: "#352c6a" };
const TEAL = { top: "#6fa69d", bottom: "#5c8a80", stroke: "#1f4a42" };
const BASS_A: [number, number, number][] = [[0, 12, 5], [10, 13, 15], [17, 17, 20], [23, 12, 29], [29, 7, 30], [32, 15, 40], [40, 17, 46]];
const BASS_B: [number, number, number][] = [[5, 13, 10], [14, 11, 20], [2, 18, 6], [12, 18, 16]];

const BLACK_LINES = [
  362, 375, 381, 387, 392, 398, 404, 410, 416, 422, 428, 433, 439, 446,
  1024, 1030, 1036, 1048, 1054, 1066, 1078, 1090, 1096, 1102, 1114, 1116, 1119, 1122, 1125, 1128, 1131, 1134,
  1214, 1220, 1226, 1238, 1244, 1256, 1268, 1280, 1286, 1292, 1304, 1310, 1316, 1322, 1334, 1340, 1346, 1352, 1358, 1364, 1376, 1382, 1388, 1394,
  1451, 1457, 1463, 1475, 1481, 1487, 1504, 1510, 1516, 1522, 1528, 1534, 1540, 1552, 1558, 1564, 1570, 1576, 1582, 1588, 1594, 1600,
];
const DARK_BLOCKS = [368, 381, 392, 404, 416, 433, 1603];
const WEDGES = [451, 498, 545, 593, 640, 687, 736, 783, 830, 877, 925, 972, 1137, 1161, 1610, 1660];

function BouncyItems() {
  const id = useId().replace(/[^a-zA-Z0-9]/g, "");
  const px = (v: number) => v - ORIGIN;
  const spans: [number, number][] = [[357, 1398], [1446, 1706]];
  return (
    <LaneArt width="1536" height="34">
      <defs>
        <linearGradient id={id} x1="0" y1="0" x2="0" y2="1">
          <stop offset="0" stopColor="#ab4a92" />
          <stop offset="1" stopColor="#a84290" />
        </linearGradient>
      </defs>
      {spans.map(([a, b]) => (
        <g key={a}>
          <rect x={px(a)} y="0" width={b - a} height="31" fill={`url(#${id})`} />
          <path d={`M${px(a)} .5H${px(b)}M${px(a)} 30.5H${px(b)}`} stroke="#4d1a40" />
          <path d={`M${px(a)} 8.5H${px(b)}M${px(a)} 23.5H${px(b)}`} stroke="#74305f" />
          <path d={`M${px(a)} 8.5H${px(b)}M${px(a)} 23.5H${px(b)}`} stroke="#5c2450" strokeWidth="3" strokeDasharray="2 10" />
        </g>
      ))}
      {DARK_BLOCKS.map((x) => <rect key={x} x={px(x)} y={0} width={6} height={x === 1603 ? 31 : 14} fill="#50204a" opacity=".8" />)}
      <rect x={px(1114)} y="6" width="47" height="5" fill="#6a2a5a" />
      <rect x={px(1137)} y="21" width="24" height="5" fill="#6a2a5a" />
      {BLACK_LINES.map((x) => <rect key={x} x={px(x)} y="0" width="1" height="31" fill="#1c0c18" />)}
      {WEDGES.map((x) => <polygon key={x} points={`${px(x)},31 ${px(x)},26 ${px(x) + 5},31`} fill="#f1dcea" />)}
      <rect x={px(1492)} y="0" width="6" height="31" fill="#f6eaf2" />
      <rect x={px(1494)} y="31" width="5" height="2" fill="#777" />
    </LaneArt>
  );
}

type Pt = [number, number, boolean?];
function Curve({ color, pts, top, fillPts, h }: { color: string; pts: Pt[]; top: number; fillPts?: [number, number][]; h: number }) {
  const px = (v: number) => v - ORIGIN;
  const poly = pts.map(([x, y]) => `${px(x)},${y - top + 0.5}`).join(" ");
  return (
    <LaneArt width="1536" height={h} style={{ overflow: "visible" }}>
      {fillPts && <polygon points={fillPts.map(([x, y]) => `${px(x)},${y - top}`).join(" ")} fill={color} opacity=".28" />}
      <polyline points={poly} fill="none" stroke={color} strokeWidth="1" />
      {pts.filter((p) => p[2] !== undefined).map(([x, y, solid], i) => (
        <circle key={i} cx={px(x)} cy={y - top + 0.5} r="2" fill={solid ? color : "none"} stroke={color} strokeWidth="1" />
      ))}
    </LaneArt>
  );
}

function Ghost({ ys, h }: { ys: number[]; h: number }) {
  const px = (v: number) => v - ORIGIN;
  return (
    <LaneArt width="1536" height={h}>
      {ys.map((y) =>
        [[357, 1398], [1446, 1706]].map(([a, b]) => (
          <path key={`${y}-${a}`} d={`M${px(a)} ${y + 0.5}H${px(b)}`} stroke="#a4a7a4" strokeDasharray="5 2 2 3" shapeRendering="crispEdges" />
        ))
      )}
    </LaneArt>
  );
}

const TEAL_PTS: Pt[] = [[357, 142], [1078, 142, true], [1096, 142, false], [1113, 141, false], [1125, 140, false], [1131, 139.5, false], [1137, 138, false], [1143, 137, false], [1149, 135, false], [1161, 134, false], [1161, 141, true], [1232, 142, false], [1893, 142]];
const PINK_PTS: Pt[] = [[357, 168], [1090, 168, true], [1107, 167, false], [1119, 166, false], [1131, 164, false], [1137, 160, false], [1161, 160, false], [1161, 168, true], [1208, 168, false], [1232, 168, false], [1893, 168]];
const BLUE_XY: [number, number][] = [[685, 228], [687, 228], [692, 228], [695, 226], [698, 224], [704, 221], [731, 221], [733, 223], [735, 225], [738, 226], [743, 227], [748, 228], [753, 232], [759, 232], [762, 228], [789, 228], [800, 222], [803, 222], [817, 222], [821, 223], [825, 224], [830, 225], [838, 228], [850, 226], [865, 222], [880, 224], [895, 222], [910, 224], [925, 228], [940, 226], [955, 222], [970, 225], [985, 228], [995, 231], [1000, 231], [1005, 231], [1009, 230], [1012, 229], [1015, 228]];
const BLUE_PTS: Pt[] = [[357, 228], ...BLUE_XY.map(([x, y]) => [x, y, false] as Pt), [1893, 228]];
const GREEN_PTS: Pt[] = [[357, 360], [1634.5, 360, true], [1646.5, 369, false], [1681.6, 369, false], [1681.6, 360, false], [1693.6, 369, false], [1893, 369]];

function TealClip({ from, to }: { from: number; to: number }) {
  const w = to - from;
  return (
    <ItemBox style={{ left: from - ORIGIN, width: w }}>
      <svg width={w} height="32" style={{ display: "block" }}>
        <rect x="0" y="0" width={w} height="17" fill="#34564f" />
        <rect x="0" y="17" width={w} height="14" fill="#6fa99e" />
        <path d={`M0 .5H${w}M0 8.5H${w}M0 20.5H${w}M0 30.5H${w}`} stroke="#16322c" />
        <path d={`M${w / 2} 3V15`} stroke="#cfd8d4" strokeDasharray="1 2" />
        <polygon points="0,31 0,27 4,31" fill="#eef4f2" />
      </svg>
    </ItemBox>
  );
}
function BlueClip({ from, to }: { from: number; to: number }) {
  const w = to - from;
  return (
    <ItemBox style={{ left: from - ORIGIN, width: w }}>
      <svg width={w} height="32" style={{ display: "block" }}>
        <rect x="0.5" y="0.5" width={w - 1} height="30" fill="#7cc4de" stroke="#2e5a70" />
        <rect x="4" y="13" width={w - 8} height="1" fill="#2e5a70" />
        <polygon points="0,31 0,26 5,31" fill="#eaf6fa" />
      </svg>
    </ItemBox>
  );
}

const LANE_CONTENT: React.ReactNode[] = [
  <BouncyItems />,
  <>
    <EnvBand $top={12} $h={10} $c="#a1b3b3" />
    <Ghost ys={[6, 16]} h={27} />
    <Curve color="#3b8a8a" pts={TEAL_PTS} top={131} h={27} fillPts={[[1078, 142], [1113, 141], [1149, 135], [1161, 134], [1161, 142], [1078, 142]]} />
  </>,
  <>
    <EnvBand $top={11} $h={10} $c="#d18fb1" />
    <Ghost ys={[5, 15]} h={26} />
    <Curve color="#f5107e" pts={PINK_PTS} top={158} h={26} fillPts={[[1131, 164], [1137, 160], [1161, 160], [1161, 169], [1131, 169]]} />
  </>,
  <Item from={640} to={1025} {...TEAL} loop={47.33} dots={12} dotGap={12} />,
  <>
    <EnvBand $top={10} $h={11} $c="#8989cd" />
    <Curve color="#1414ee" pts={BLUE_PTS} top={219} h={26} />
  </>,
  <>
    {[500, 595, 689, 784, 878, 972].map((x) => (
      <PcPin key={x} style={{ left: x - ORIGIN - 1 }}><PcLabel>PC</PcLabel></PcPin>
    ))}
  </>,
  <>
    <TealClip from={1279} to={1303} />
    <TealClip from={1421} to={1446} />
    <TealClip from={1581} to={1588} />
    <TealClip from={1610} to={1634} />
    <TealClip from={1658} to={1682} />
  </>,
  <>
    <BlueClip from={1634} to={1658} />
    <BlueClip from={1682} to={1706} />
  </>,
  <>
    <EnvBand style={{ width: 1634 - ORIGIN, right: "auto" }} $top={11} $h={10} $c="#9fb29f" />
    <Curve color="#388a3c" pts={GREEN_PTS} top={350} h={26} />
    <LaneArt width="1536" height="26">
      <path d={`M${1634 - ORIGIN} 10.5h19M${1682 - ORIGIN} 10.5h18`} stroke="#a4a7a4" />
    </LaneArt>
  </>,
  <>
    <Item from={451} to={641} {...BASSC} loop={47.33} notes={BASS_A} />
    <Item from={1162} to={1279} {...BASSC} loop={23.67} notes={BASS_B} />
    <Item from={1303} to={1398} {...BASSC} loop={23.67} notes={BASS_B} />
    <Item from={1446} to={1539} {...BASSC} loop={23.67} notes={BASS_B} />
    <Item from={1587} to={1611} {...BASSC} loop={23.67} notes={BASS_B} />
  </>,
  <>
    <Item from={403} to={427} {...PURPLE} loop={11.83} depth={3} dots={13} dotGap={6} />
    <Item from={427} to={451} {...PURPLE} loop={11.83} depth={3} line={13} />
    <Item from={451} to={1020} {...PURPLE} loop={23.67} line={13} />
    <Item from={1208} to={1398} {...PURPLE} loop={23.67} line={13} />
    <Item from={1563} to={1659} {...PURPLE} loop={23.67} line={13} />
  </>,
  <>
    <Item from={451} to={1020} {...PURPLE} loop={23.67} dots={13} dotGap={12} />
    <Item from={1020} to={1138} {...PURPLE} loop={23.67} dots={13} dotGap={3} />
    <Item from={1208} to={1493} {...PURPLE} loop={23.67} dots={13} dotGap={12} />
    <Item from={1587} to={1659} {...PURPLE} loop={23.67} dots={13} dotGap={12} />
  </>,
  <>
    <Item from={451} to={1020} {...PURPLE} loop={23.67} dots={13} dotGap={6} />
    <Item from={1208} to={1493} {...PURPLE} loop={23.67} dots={13} dotGap={6} />
    <Item from={1587} to={1659} {...PURPLE} loop={23.67} dots={13} dotGap={6} />
  </>,
];

function Grid() {
  const xs = Array.from({ length: 131 }, (_, k) => Math.round((k * BAR) / 2) + 0.5);
  return (
    <GridOverlay width="1537" height="460">
      {xs.map((x) => (
        <line key={x} x1={x} x2={x} y1="0" y2="460" stroke="#8e908e" strokeDasharray="1 2" opacity=".8" shapeRendering="crispEdges" />
      ))}
    </GridOverlay>
  );
}

function RulerView() {
  const ticks = Array.from({ length: 131 }, (_, k) => k);
  return (
    <Ruler>
      <RulerTicks width="1552" height="30">
        {ticks.map((k) => {
          const x = Math.round((k * BAR) / 2) + 1.5;
          const len = k % 8 === 0 ? 30 : k % 4 === 0 ? 9 : k % 2 === 0 ? 7 : 4;
          return <line key={k} x1={x} x2={x} y1={30 - len} y2="30" stroke={k % 8 === 0 ? "#9a9a9a" : "#8a8a8a"} shapeRendering="crispEdges" />;
        })}
        <path d="M1 14V1H13ZM1 14L13 1" fill="#4a3030" stroke="#eee" strokeWidth="1" />
      </RulerTicks>
      {RULER.map((m) => (
        <RulerMark key={m.bar} style={{ left: m.x + 4 }}>
          <RulerBar>{m.bar}</RulerBar>
          <RulerTime>{m.time}</RulerTime>
        </RulerMark>
      ))}
    </Ruler>
  );
}

/* ---------- mixer parts ---------- */
const SCALE = ["-Inf", "-6-", "-18-", "-30-", "-42-", "-54-"];
const METER_L = ["12", "6", "0-", "6-", "12-", "18-", "24-", "30-", "36-", "42-"];
const METER_R = ["12", "6", "-0", "-6", "-12", "-18", "-24", "-30", "-36", "-42"];
const EnvIcon = () => (
  <svg width="14" height="9" viewBox="0 0 14 9">
    <path d="M1 7l4-1 2-4 2 4 4 1" fill="none" stroke="#4d5c5a" strokeWidth="1.6" />
    <circle cx="7" cy="2" r="1.5" fill="#4d5c5a" />
  </svg>
);

function Slots({ fx, pad }: { fx: string[]; pad: string }) {
  return (
    <SlotStack $pad={pad}>
      {[0, 1, 2, 3].map((i) => <FxSlot key={i} $used={!!fx[i]}>{fx[i] ?? ""}</FxSlot>)}
    </SlotStack>
  );
}

function Sends({ pad, label }: { pad: string; label?: string }) {
  return (
    <SlotStack $pad={pad}>
      {[0, 1, 2, 3].map((i) => (
        <SendSlot key={i} $label={!!label && i === 0}>{i === 0 ? label : ""}</SendSlot>
      ))}
    </SlotStack>
  );
}

const RouteCard = ({ blue }: { blue?: boolean }) => (
  <RouteWide>
    <RouteHead><RouteM>M</RouteM><span>R</span><RouteS $blue={blue}>S</RouteS></RouteHead>
    <RouteText>ROUTING</RouteText>
  </RouteWide>
);

function Phase({ speaker }: { speaker?: boolean }) {
  return (
    <SideArt width="20" height="60" viewBox="0 0 20 60">
      {speaker ? (
        <>
          <rect x="2" y="1" width="17" height="17" fill="rgba(60,80,80,.4)" />
          <path d="M6 6h3l4-2v11l-4-2H6z" fill="#cfd8d6" />
          <rect x="9.5" y="18" width="2" height="6" fill="rgba(60,80,80,.4)" />
        </>
      ) : (
        <>
          <rect x="2.5" y="1.5" width="16" height="16" fill="none" stroke="rgba(60,70,70,.28)" />
          <path d="M6 5l7 4-3 1v4l-4 1" fill="none" stroke="rgba(60,70,70,.28)" />
        </>
      )}
      <path d="M2 24h17v17l-5 5h-7l-5-5z" fill="rgba(60,70,70,.42)" />
      <text x="10.5" y="34" fontSize="8.5" fontFamily="Liberation Sans" fill="#e4e8e8" textAnchor="middle">IN</text>
      <circle cx="10.5" cy="41" r="5.5" fill="none" stroke="#e4e8e8" />
      <path d="M7 39.5h7l-3.5 5z" fill="#e4e8e8" />
      <path d="M8 48h5v4h2l-4 5-4-5h2z" fill="rgba(60,70,70,.38)" transform="rotate(10 10 50)" />
    </SideArt>
  );
}

function MixStrip({ s }: { s: (typeof STRIPS)[number] }) {
  const t = TONES[s.tone];
  return (
    <Strip $w={83}>
      <Slots fx={s.fx} pad="0 2px 0 1px" />
      <Divider $inset={23} $mt={2} $mb={7} />
      <Sends pad="0 2px 0 1px" />
      <Divider $inset={23} $mt={3} $mb={6} />
      <ControlRow $pad={5}>
        <FxBox $off={s.fxOff}>
          <FxTop><Power c={s.fxOff ? "#222" : "#17743f"} s={8} /></FxTop>
          <FxText>FX</FxText>
        </FxBox>
        <RouteCard />
      </ControlRow>
      <StripName>{s.name}</StripName>
      <StripBody $a={t.strip[0]} $b={t.strip[1]}>
        <PanRow $shift={3}><Knob $d={19} $angle={s.pan} $pan /></PanRow>
        <BodyRow $pad={0}>
          <FaderPanel>
            <ReadMain><ReadOut>{s.vol}</ReadOut></ReadMain>
            <Scale $w={28}>{SCALE.map((v) => <span key={v}>{v}</span>)}</Scale>
            <FaderLine $x={39} />
            {s.tick && <GainTick />}
            <FaderCap $x={29} $top={s.top} />
          </FaderPanel>
          <SideCol $ml={-16}>
            <SideKey $c="#5c2e26" $mb={6}>M</SideKey>
            <SideKey $c="#50582a" $mb={6}>S</SideKey>
            <SideEnv><EnvIcon /></SideEnv>
            <TrimText>trim</TrimText>
            <Phase speaker={s.speaker} />
          </SideCol>
        </BodyRow>
        <RecRound $x={49} />
      </StripBody>
      <MixNumber $bg={t.num} $dark={t.dark}>
        {s.no}
        {s.handle && <MixHandle />}
      </MixNumber>
    </Strip>
  );
}

function MasterStrip() {
  return (
    <Strip $w={125}>
      <Slots fx={[]} pad="0 2px 0 2px" />
      <Divider $inset={23} $mt={2} $mb={7} />
      <Sends pad="0 2px 0 2px" label="Left Output / Right Outp" />
      <Divider $inset={23} $mt={3} $mb={6} />
      <ControlRow $pad={5}>
        <FxBox $off>
          <FxTop><Power c="#222" s={8} /></FxTop>
          <FxText>FX</FxText>
        </FxBox>
        <RouteCard blue />
        <MonoBox>
          <MonoBtn>
            <svg width="22" height="9" viewBox="0 0 22 9"><path d="M1 1l7 3.5L1 8zM21 1l-7 3.5L21 8z" fill="#5c6664" /></svg>
          </MonoBtn>
          MONO
        </MonoBox>
      </ControlRow>
      <StripName>MASTER</StripName>
      <StripBody $a="#a4aeac" $b="#a0aaa8">
        <PanRow $shift={0}><Knob $d={19} $angle={0} $pan /></PanRow>
        <BodyRow $pad={5}>
          <FaderPanel $master>
            <ReadWide><ReadOut>0.00dB</ReadOut></ReadWide>
            <Scale $w={20} $left={24} $h={122} $mt={39}>{["-6-", "-18-", "-30-", "-42-", "-54-"].map((v) => <span key={v}>{v}</span>)}</Scale>
            <Scale $w={18} $left={3} $h={135} $mt={31}>{METER_L.map((v, i) => <span key={i}>{v}</span>)}</Scale>
            <Scale $w={18} $left={52} $h={135} $mt={31}>{METER_R.map((v, i) => <span key={i}>{v}</span>)}</Scale>
            <Scale $w={18} $left={16} $h={12}><span>-Inf</span></Scale>
            <Scale $w={18} $left={46} $h={12}><span>-Inf</span></Scale>
            <Scale $w={18} $left={18} $h={12} $mt={162}><span>-Inf</span></Scale>
            <Scale $w={18} $left={48} $h={12} $mt={162}><span>-Inf</span></Scale>
            <MeterBlock $x={4} />
            <MeterBlock $x={55} />
            <FaderLine $x={75} />
            <FaderCap $x={66} $top={50} />
          </FaderPanel>
          <SideCol $ml={-16}>
            <SideKey $c="#5c2e26" $mb={6}>M</SideKey>
            <SideKey $c="#50582a" $mb={6}>S</SideKey>
            <SideEnv><EnvIcon /></SideEnv>
            <TrimText>trim</TrimText>
          </SideCol>
        </BodyRow>
        <RecRound $x={91} $gear><Gear s={15} c="#c4c4c4" /></RecRound>
      </StripBody>
      <MixNumber $bg="#7d8585" />
    </Strip>
  );
}

export default function App() {
  return (
    <>
      <Global />
      <Desktop>
        <WallArt width="1920" height="1080">
          <path d="M1071 1066h40l-4 14h-28z" fill="#62bcd6" />
          <path d="M1240 1068l13 12h-6l-12-12z" fill="#7a2410" />
          <path d="M1563 1068l10 12h-6l-10-12z" fill="#7a2410" />
          <path d="M1760 1068l5 12h-4l-5-12z" fill="#7a2410" />
          <path d="M1668 1066h52l6 14h-50z" fill="#62bcd6" />
          <path d="M1905 820l9 3q4 2 4 20 0 30-2 44 -1 3-7 3h-4z" fill="#62bcd6" />
        </WallArt>
        <WallText>#386 Deoxys | Pokemon (c) Nintendo | wallpaper by MapleRose</WallText>
        <Shell>
          <MenuBar>
            <MenuList>
              {MENU.map((m, i) => {
                const idx = m.indexOf(MENU_KEY[i]);
                return (
                  <span key={m}>
                    {m.slice(0, idx)}<MenuKey>{m[idx]}</MenuKey>{m.slice(idx + 1)}
                  </span>
                );
              })}
            </MenuList>
            <AudioStatus>[44.1kHz 24bit WAV : 2/2ch 1024spls ~43/187ms WaveOut]</AudioStatus>
          </MenuBar>

          <Upper>
            <LeftCol>
              <Toolbar>
                {TOOLS.map((t, i) => (
                  <ToolButton key={i} $on={t.on}>
                    <svg width="28" height="28" viewBox="1 1 28 28">{t.art}</svg>
                  </ToolButton>
                ))}
              </Toolbar>
              <TrackList>
                {ROWS.map((r, i) => r.kind === "track" ? <TrackRowView key={i} r={r} /> : <EnvRowView key={i} r={r} />)}
              </TrackList>
              <StatusLine>bouncy [items] 114 [FX] 3</StatusLine>
            </LeftCol>

            <RightCol>
              <OverBar />
              <RulerView />
              <ArrangeRow>
                <Timeline>
                  {ROWS.map((r, i) => (
                    <Lane key={i} $h={r.h} $tone={r.lane} $hair={r.kind === "env"}>{LANE_CONTENT[i]}</Lane>
                  ))}
                  <Lane $tone="l" />
                  <Grid />
                </Timeline>
                <VScroll>
                  <ScrollDot $m="3px 0 0" />
                  <VThumb />
                  <ScrollDot $m="33px 0 0" />
                  <ScrollSign $m="5px 0 0">+</ScrollSign>
                  <ScrollSign $m="1px 0 0">−</ScrollSign>
                  <ScrollSign $m="1px 0 0">−</ScrollSign>
                </VScroll>
              </ArrangeRow>
              <HScroll>
                <HDot />
                <HThumb />
                <HControls>
                  <HDot />
                  <span>+</span>
                  <span>|</span>
                  <span>−</span>
                </HControls>
              </HScroll>
            </RightCol>
          </Upper>

          <Transport>
            <SkipGroup>
              <TransCell $w={28}>
                <svg width="12" height="11" viewBox="0 0 12 11"><path d="M1 1h2v9H1zM11 1v9L4 5.5z" fill="#7e7e7e" /></svg>
              </TransCell>
              <TransCell $w={28}>
                <svg width="12" height="11" viewBox="0 0 12 11"><path d="M9 1h2v9H9zM1 1v9l7-4.5z" fill="#7e7e7e" /></svg>
              </TransCell>
            </SkipGroup>
            <PlayGroup>
              <TransCell $w={30}>
                <svg width="10" height="10"><rect width="10" height="10" fill="#7e7e7e" /></svg>
              </TransCell>
              <TransCell $w={36} $light>
                <svg width="11" height="11" viewBox="0 0 11 11"><path d="M1 0l10 5.5L1 11z" fill="#111" /></svg>
              </TransCell>
              <TransCell $w={30} $light>
                <svg width="8" height="10"><path d="M0 0h3v10H0zM5 0h3v10H5z" fill="#111" /></svg>
              </TransCell>
            </PlayGroup>
            <RecordBtn />
            <RepeatBtn>
              <svg width="14" height="14" viewBox="0 0 14 14" fill="none" stroke="#828282" strokeWidth="1.6">
                <path d="M2 7a5 5 0 0 1 8-4M12 7a5 5 0 0 1-8 4" />
                <path d="M10 1v3H7M4 13v-3h3" />
              </svg>
            </RepeatBtn>
            <AutoBox>
              <AutoHead>
                <svg width="13" height="8" viewBox="0 0 13 8"><path d="M1 7l4-1 2-4 2 4 3 1" fill="none" stroke="#8a8a8a" strokeWidth="1.6" /></svg>
                GLOBAL
              </AutoHead>
              <AutoMode>
                none
                <svg width="11" height="11" viewBox="0 0 11 11"><circle cx="5.5" cy="5.5" r="5" fill="none" stroke="#7e7e7e" /><path d="M3 4h5L5.5 8z" fill="#7e7e7e" /></svg>
              </AutoMode>
            </AutoBox>
            <TimeWrap>1.1.00 / 0:00.000</TimeWrap>
            <Stopped>[Stopped]</Stopped>
            <Tempo>BPM<TempoValue>72</TempoValue></Tempo>
            <Meter>4/4</Meter>
            <RateBox>
              <RateHead><span>Rate:</span><span>1.0</span></RateHead>
              <RateSlider><RateThumb /></RateSlider>
            </RateBox>
            <Selection>
              <span>Selection:</span>
              <span>54.1.00</span>
              <span>54.1.00</span>
              <span>0.0.00</span>
            </Selection>
          </Transport>

          <Mixer>
            <MasterStrip />
            {STRIPS.map((s) => <MixStrip key={s.no} s={s} />)}
          </Mixer>

          <TabBar>
            <Bang>!</Bang>
            <MixerTab><TabClose>×</TabClose>Mixer</MixerTab>
          </TabBar>
        </Shell>
        <Pointer width="14" height="22" viewBox="0 0 14 22">
          <path d="M1 1v16l4-4 3 7 3-1-3-7h5z" fill="#111" stroke="#eee" strokeWidth="1" />
        </Pointer>
      </Desktop>
    </>
  );
}
